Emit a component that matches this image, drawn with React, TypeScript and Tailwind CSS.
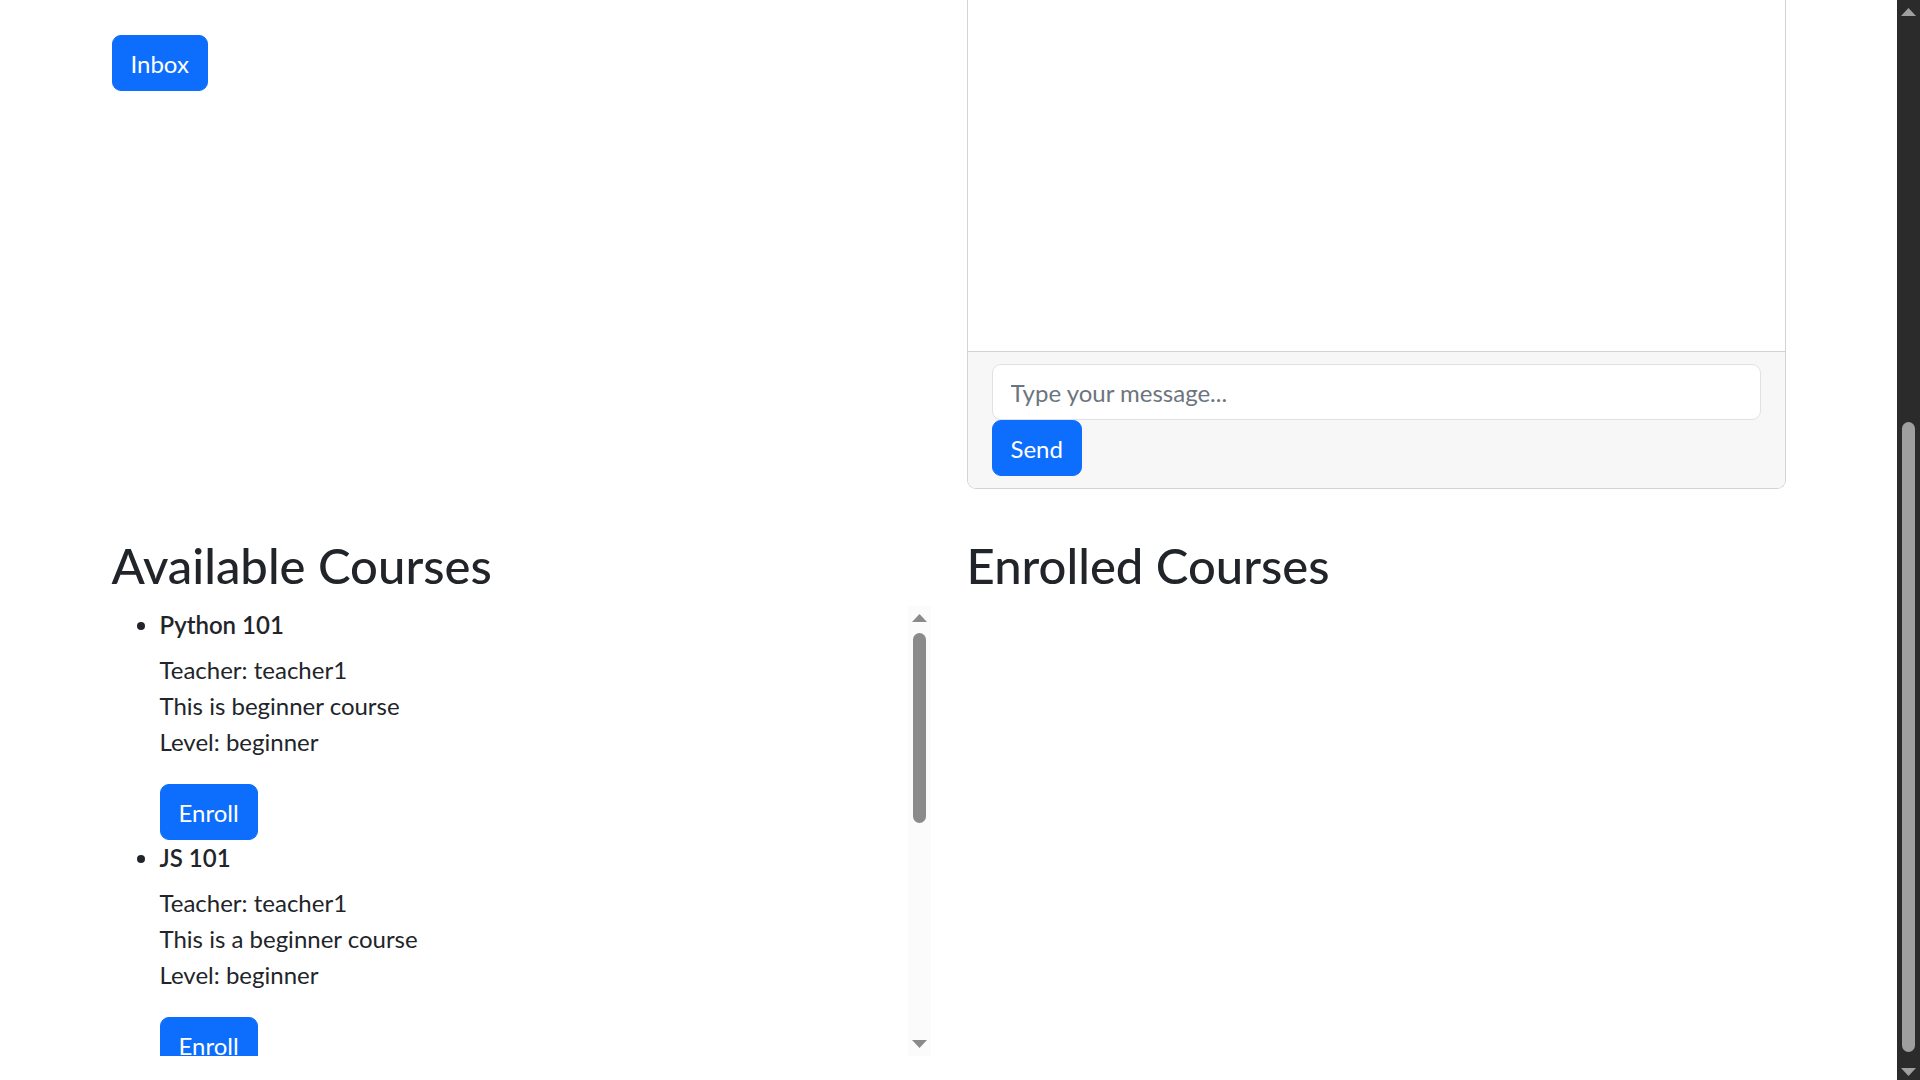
import React from 'react';

const courses = [
  { title: 'Python 101', teacher: 'teacher1', description: 'This is beginner course', level: 'beginner' },
  { title: 'JS 101', teacher: 'teacher1', description: 'This is a beginner course', level: 'beginner' },
];

const ArrowUp = ({ color }: { color: string }) => (
  <svg width="15" height="8" viewBox="0 0 15 8" className="block">
    <polygon points="7.5,0 15,8 0,8" fill={color} />
  </svg>
);

const ArrowDown = ({ color }: { color: string }) => (
  <svg width="15" height="8" viewBox="0 0 15 8" className="block">
    <polygon points="0,0 15,0 7.5,8" fill={color} />
  </svg>
);

// Inner list scrollbar (light)
const ListScrollbar = () => (
  <div className="flex w-[23px] shrink-0 flex-col items-center bg-[#fbfbfb]">
    <div className="mt-[8px]">
      <ArrowUp color="#8a8a8a" />
    </div>
    <div className="mt-[11px] h-[190px] w-[13px] rounded-full bg-[#8a8a8a]" />
    <div className="mb-[8px] mt-auto">
      <ArrowDown color="#8a8a8a" />
    </div>
  </div>
);

// Window scrollbar (dark)
const PageScrollbar = () => (
  <div className="flex h-full w-[23px] shrink-0 flex-col items-center bg-[#2b2b2b]">
    <div className="mt-[8px]">
      <ArrowUp color="#a0a0a0" />
    </div>
    <div className="mt-[406px] h-[630px] w-[13px] rounded-full bg-[#9f9f9f]" />
    <div className="mb-[4px] mt-auto">
      <ArrowDown color="#a0a0a0" />
    </div>
  </div>
);

const PrimaryButton = ({ children }: { children: React.ReactNode }) => (
  <button className="rounded-[9px] border border-[#0d6efd] bg-[#0d6efd] px-[18px] pb-[8px] pt-[10px] text-[24px] leading-[36px] text-white">
    {children}
  </button>
);

export default function App() {
  return (
    <div className="flex h-screen w-full overflow-hidden bg-white font-[Lato,'Noto_Sans',sans-serif] text-[24px] leading-[36px] text-[#212529]">
      <main className="min-w-0 flex-1">
        <div className="mx-auto w-[1710px] px-[18px]">
          {/* Top row: inbox + chat */}
          <div className="flex gap-[36px]">
            <div className="w-[819px] pt-[35px]">
              <PrimaryButton>Inbox</PrimaryButton>
            </div>
            <div className="w-[819px]">
              <div className="overflow-hidden rounded-b-[9px] border border-t-0 border-[#d3d3d3]">
                <div className="h-[351px] bg-white" />
                <div className="border-t border-[#d3d3d3] bg-[#f7f7f7] px-[24px] py-[12px]">
                  <input
                    type="text"
                    placeholder="Type your message..."
                    className="block w-full rounded-[9px] border border-[#dee2e6] bg-white px-[18px] pb-[8px] pt-[10px] text-[24px] leading-[36px] text-[#212529] outline-none placeholder:text-[#6c757d]"
                  />
                  <div className="flex">
                    <PrimaryButton>Send</PrimaryButton>
                  </div>
                </div>
              </div>
            </div>
          </div>

          {/* Courses row */}
          <div className="mt-[47px] flex gap-[36px]">
            <div className="w-[819px]">
              <h2 className="mb-[12px] pt-[1px] text-[49px] font-medium leading-[56.6px]">Available Courses</h2>
              <div className="flex h-[450px]">
                <div className="min-w-0 flex-1 overflow-hidden">
                  <ul className="list-disc pl-[48px] pt-[1px]">
                    {courses.map((course) => (
                      <li key={course.title}>
                        <div className="h-[36px] font-semibold">{course.title}</div>
                        <p className="mb-[24px] mt-[9px]">
                          Teacher: {course.teacher}
                          <br />
                          {course.description}
                          <br />
                          Level: {course.level}
                        </p>
                        <PrimaryButton>Enroll</PrimaryButton>
                      </li>
                    ))}
                  </ul>
                </div>
                <ListScrollbar />
              </div>
            </div>
            <div className="w-[819px]">
              <h2 className="mb-[12px] pt-[1px] text-[49px] font-medium leading-[56.6px]">Enrolled Courses</h2>
            </div>
          </div>
        </div>
      </main>
      <PageScrollbar />
    </div>
  );
}
